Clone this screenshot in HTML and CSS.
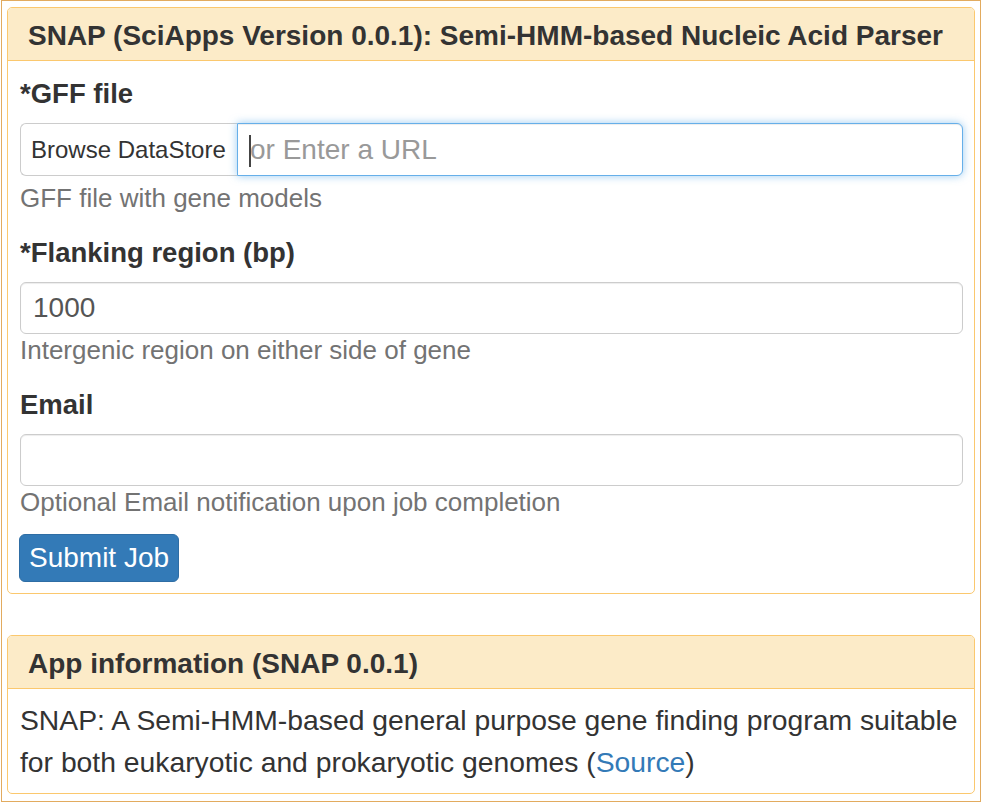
FILE: index.html
```html
<!DOCTYPE html>
<html lang="en">
<head>
<meta charset="utf-8">
<title>SNAP</title>
<link rel="stylesheet" href="styles.css">
</head>
<body>
<div class="frame">
  <section class="panel">
    <header class="panel-heading">SNAP (SciApps Version 0.0.1): Semi-HMM-based Nucleic Acid Parser</header>
    <div class="panel-body">
      <div class="form-group">
        <label class="label">*GFF file</label>
        <div class="input-group">
          <button class="addon" type="button">Browse DataStore</button>
          <div class="url-wrap">
            <input class="input url" type="text" placeholder="or Enter a URL">
            <span class="caret"></span>
          </div>
        </div>
        <div class="help help-first">GFF file with gene models</div>
      </div>
      <div class="form-group">
        <label class="label">*Flanking region (bp)</label>
        <input class="input field" type="text" value="1000">
        <div class="help">Intergenic region on either side of gene</div>
      </div>
      <div class="form-group">
        <label class="label">Email</label>
        <input class="input field" type="text" value="">
        <div class="help">Optional Email notification upon job completion</div>
      </div>
      <button class="btn-primary" type="button">Submit Job</button>
    </div>
  </section>
  <section class="panel panel-info">
    <header class="panel-heading">App information (SNAP 0.0.1)</header>
    <div class="panel-body info-body">
      <p class="info-text">SNAP: A Semi-HMM-based general purpose gene finding program suitable for both eukaryotic and prokaryotic genomes (<a href="#" class="link">Source</a>)</p>
    </div>
  </section>
</div>
</body>
</html>
```
FILE: styles.css
```css
* { box-sizing: border-box; }
html, body { margin: 0; padding: 0; background: #fff; }
body {
  font-family: "Liberation Sans", Arial, sans-serif;
  color: #333;
}
.frame {
  margin-left: 1px;
  width: 980px;
  height: 802px;
  border: 1px solid #e2ab5f;
  padding: 6px 5px 7px 5px;
  display: flex;
  flex-direction: column;
}
.panel {
  border: 1px solid #fbc86e;
  border-radius: 5px;
  background: #fff;
}
.panel-info { margin-top: 41px; }
.panel-heading {
  background: #fcebc8;
  border-bottom: 1px solid #fbc86e;
  border-radius: 4px 4px 0 0;
  padding: 12px 20px 8px 20px;
  font-size: 28px;
  line-height: 32px;
  font-weight: bold;
  color: #333;
}
.panel-body {
  padding: 13px 11px 10.5px 12px;
}
.form-group { display: flex; flex-direction: column; }
.form-group + .form-group { margin-top: 19px; }
.label {
  font-size: 27.5px;
  line-height: 39px;
  font-weight: bold;
  margin-bottom: 10px;
}
.input-group {
  display: flex;
  height: 53px;
}
.addon {
  flex: none;
  width: 217px;
  height: 53px;
  background: #fff;
  border: 1px solid #ccc;
  border-right: none;
  border-radius: 6px 0 0 6px;
  font-family: "Liberation Sans", Arial, sans-serif;
  font-size: 24px;
  color: #333;
  padding: 0 10px;
  text-align: left;
}
.url-wrap {
  flex: 1;
  position: relative;
  display: flex;
}
.input {
  font-family: "Liberation Sans", Arial, sans-serif;
  font-size: 28px;
  color: #555;
  border: 1px solid #ccc;
  border-radius: 6px;
  padding: 0 12px;
  background: #fff;
  outline: none;
  box-shadow: inset 0 1px 1px rgba(0,0,0,.075);
  width: 100%;
}
.input::placeholder { color: #999; }
.url {
  height: 53px;
  border-radius: 0 6px 6px 0;
  border: 1.5px solid #66afe9;
  box-shadow: inset 0 1px 1px rgba(0,0,0,.075), 0 0 9px rgba(102,175,233,.65);
}
.caret {
  position: absolute;
  left: 12px;
  top: 12px;
  width: 2px;
  height: 32px;
  background: #444;
}
.field { height: 52px; }
.help {
  font-size: 26px;
  line-height: 31.2px;
  color: #737373;
  margin-top: 1px;
}
.help-first { margin-top: 7px; }
.btn-primary {
  align-self: flex-start;
  margin-top: 15.5px;
  margin-left: -1px;
  height: 48px;
  padding: 0 9px;
  background: #337ab7;
  border: 1px solid #2e6da4;
  border-radius: 6px;
  color: #fff;
  font-family: "Liberation Sans", Arial, sans-serif;
  font-size: 28px;
  display: block;
}
.info-body { padding: 10px 11px 10px 12px; }
.info-text {
  margin: 0;
  font-size: 28.3px;
  line-height: 42px;
  color: #333;
}
.link { color: #337ab7; text-decoration: none; }
```
